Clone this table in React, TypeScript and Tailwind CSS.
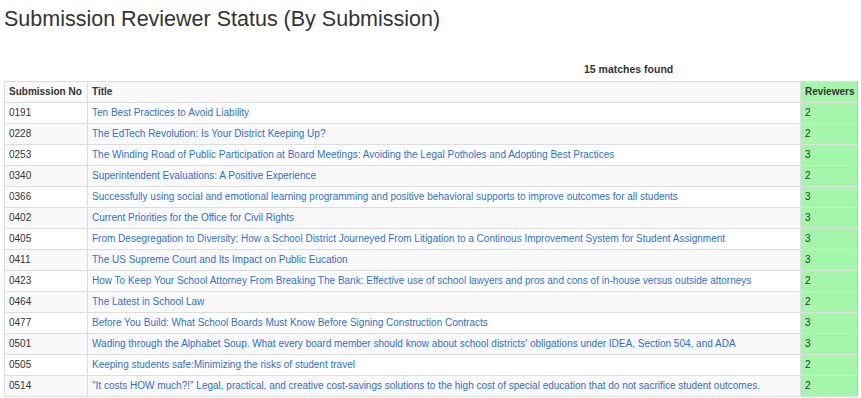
const rows: [string, string, number][] = [
  ['0191', 'Ten Best Practices to Avoid Liability', 2],
  ['0228', 'The EdTech Revolution: Is Your District Keeping Up?', 2],
  ['0253', 'The Winding Road of Public Participation at Board Meetings: Avoiding the Legal Potholes and Adopting Best Practices', 3],
  ['0340', 'Superintendent Evaluations: A Positive Experience', 2],
  ['0366', 'Successfully using social and emotional learning programming and positive behavioral supports to improve outcomes for all students', 3],
  ['0402', 'Current Priorities for the Office for Civil Rights', 3],
  ['0405', 'From Desegregation to Diversity: How a School District Journeyed From Litigation to a Continous Improvement System for Student Assignment', 3],
  ['0411', 'The US Supreme Court and Its Impact on Public Eucation', 3],
  ['0423', 'How To Keep Your School Attorney From Breaking The Bank: Effective use of school lawyers and pros and cons of in-house versus outside attorneys', 2],
  ['0464', 'The Latest in School Law', 2],
  ['0477', 'Before You Build: What School Boards Must Know Before Signing Construction Contracts', 3],
  ['0501', "Wading through the Alphabet Soup. What every board member should know about school districts' obligations under IDEA, Section 504, and ADA", 3],
  ['0505', 'Keeping students safe:Minimizing the risks of student travel', 2],
  ['0514', '"It costs HOW much?!" Legal, practical, and creative cost-savings solutions to the high cost of special education that do not sacrifice student outcomes.', 2],
];

export default function App() {
  return (
    <div className="w-[861px] h-[398px] overflow-hidden bg-white text-[#333] font-['Liberation_Sans',Arial,sans-serif]">
      <h1 className="pl-[4px] pt-[7px] text-[21.5px] leading-[24px] text-[#333]">
        Submission Reviewer Status (By Submission)
      </h1>

      <div className="mt-[31px] pl-[584px] text-[10.5px] leading-[14px] font-bold">15 matches found</div>

      <table className="mt-[5px] ml-[4px] w-[854px] table-fixed border-collapse text-[10px] leading-[12px]">
        <colgroup>
          <col className="w-[83px]" />
          <col />
          <col className="w-[57px]" />
        </colgroup>
        <tbody>
          <tr className="bg-[#f9f9f9]">
            <td className="border border-[#ddd] px-[4px] py-[4px] font-bold whitespace-nowrap">Submission No</td>
            <td className="border border-[#ddd] px-[4px] py-[4px] font-bold">Title</td>
            <td className="border border-[#ddd] border-x-[#8fe393] bg-[#a4f7aa] px-[4px] py-[4px] font-bold">
              Reviewers
            </td>
          </tr>
          {rows.map(([no, title, n], i) => (
            <tr key={no} className={i % 2 === 1 ? 'bg-[#f9f9f9]' : 'bg-white'}>
              <td className="border border-[#ddd] px-[4px] py-[4px]">{no}</td>
              <td className="border border-[#ddd] px-[4px] py-[4px] whitespace-nowrap">
                <a href="#" className="text-[#2c6fd6]">
                  {title}
                </a>
              </td>
              <td className="border border-[#ddd] border-x-[#8fe393] bg-[#a4f7aa] px-[4px] py-[4px]">{n}</td>
            </tr>
          ))}
        </tbody>
      </table>
    </div>
  );
}
